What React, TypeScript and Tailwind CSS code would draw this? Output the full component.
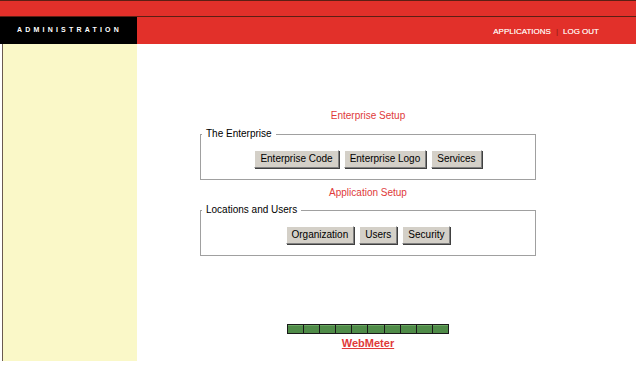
import React from 'react';

const SetupButton = ({ label }: { label: string }) => (
  <button className="px-[5px] py-[2px] bg-[#d4d0c8] text-black text-[10px] leading-[12px] border border-t-white border-l-white border-r-[#808080] border-b-[#808080] shadow-[1px_1px_0_#404040]">
    {label}
  </button>
);

const SetupGroup = ({ title, buttons }: { title: string; buttons: string[] }) => (
  <fieldset className="border border-[#a0a0a0] px-0 pt-[10px] pb-[11px]">
    <legend className="ml-[1px] px-[4px] text-[10px] leading-[12px] text-black">{title}</legend>
    <div className="flex justify-center gap-[5px]">
      {buttons.map((b) => (
        <SetupButton key={b} label={b} />
      ))}
    </div>
  </fieldset>
);

const App = () => {
  return (
    <div className="w-[636px] h-[366px] bg-white overflow-hidden" style={{ fontFamily: '"Liberation Sans", Arial, sans-serif' }}>
      {/* top strip */}
      <div className="h-[17px] bg-[#e2302a] border-t border-b border-[#5c1f14]" />

      {/* header row */}
      <div className="flex h-[27px]">
        <div className="w-[137px] bg-black flex items-center pl-[17px]">
          <span className="text-white font-bold text-[7px] tracking-[3.2px]">ADMINISTRATION</span>
        </div>
        <div className="flex-1 bg-[#e2302a] flex items-center justify-end pr-[37px] pt-[2px]">
          <span className="text-[#fde8e4] text-[8px] [text-shadow:0_0_0.4px_#fde8e4]">APPLICATIONS</span>
          <span className="text-[#8a1a14] text-[8px] mx-[5px]">|</span>
          <span className="text-[#fde8e4] text-[8px] [text-shadow:0_0_0.4px_#fde8e4]">LOG OUT</span>
        </div>
      </div>

      <div className="flex h-[317px]">
        {/* sidebar */}
        <div className="w-[135px] ml-[2px] bg-[#faf8c8] border-l border-[#6a5a50]" />

        {/* main content */}
        <div className="flex-1 pl-[63px] pt-[66px]">
          <div className="w-[336px] flex flex-col">
            <p className="text-center text-[10px] leading-[12px] text-[#e03a3a]">Enterprise Setup</p>
            <div className="mt-[6px]">
              <SetupGroup title="The Enterprise" buttons={['Enterprise Code', 'Enterprise Logo', 'Services']} />
            </div>
            <p className="mt-[7px] text-center text-[10px] leading-[12px] text-[#e03a3a]">Application Setup</p>
            <div className="mt-[5px]">
              <SetupGroup title="Locations and Users" buttons={['Organization', 'Users', 'Security']} />
            </div>

            {/* web meter */}
            <div className="mt-[68px] flex flex-col items-center">
              <div className="w-[162px] h-[10px] bg-[#1a1a1a] p-[1px] flex gap-[1px]">
                {[...Array(10)].map((_, i) => (
                  <div key={i} className="flex-1 bg-[#4f8b48] border-t border-[#6aa862]" />
                ))}
              </div>
              <a href="#" className="mt-[3px] text-[11px] leading-[13px] font-bold text-[#e03a3a] underline">
                WebMeter
              </a>
            </div>
          </div>
        </div>
      </div>
    </div>
  );
};

export default App;
